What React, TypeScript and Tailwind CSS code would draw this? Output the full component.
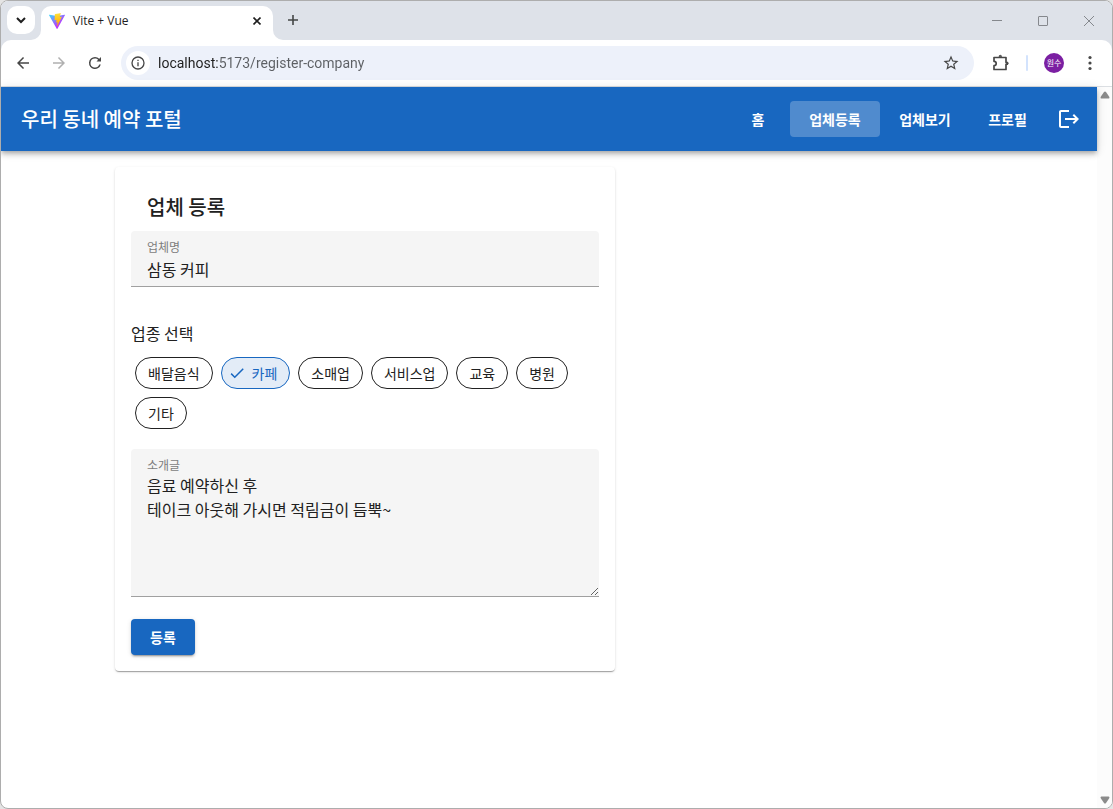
import React, { useState } from 'react';

const categories = ['배달음식', '카페', '소매업', '서비스업', '교육', '병원', '기타'];

const navItems = [
  { label: '홈', width: 'w-16' },
  { label: '업체등록', width: 'w-[90px]', active: true },
  { label: '업체보기', width: 'w-[90px]' },
  { label: '프로필', width: 'w-[75px]' },
];

// Material icon, 24x24 grid
const Icon: React.FC<{ d: string; className?: string }> = ({ d, className = 'size-5' }) => (
  <svg viewBox="0 0 24 24" fill="currentColor" className={`shrink-0 ${className}`} aria-hidden="true">
    <path d={d} />
  </svg>
);

const ViteLogo = () => (
  <svg viewBox="0 0 256 257" className="size-4 shrink-0" aria-hidden="true">
    <defs>
      <linearGradient id="vite-a" x1="-.8%" x2="57.6%" y1="7.7%" y2="78.4%">
        <stop offset="0%" stopColor="#41D1FF" />
        <stop offset="100%" stopColor="#BD34FE" />
      </linearGradient>
      <linearGradient id="vite-b" x1="43.4%" x2="50.3%" y1="2.2%" y2="89%">
        <stop offset="0%" stopColor="#FFEA83" />
        <stop offset="8.3%" stopColor="#FFDD35" />
        <stop offset="100%" stopColor="#FFA800" />
      </linearGradient>
    </defs>
    <path
      fill="url(#vite-a)"
      d="M255.153 37.938L134.897 252.976c-2.483 4.44-8.862 4.466-11.382.048L.875 37.958c-2.746-4.814 1.371-10.646 6.827-9.67l120.385 21.517a6.537 6.537 0 0 0 2.322-.004l117.867-21.483c5.438-.991 9.574 4.796 6.877 9.62Z"
    />
    <path
      fill="url(#vite-b)"
      d="M185.432.063L96.44 17.501a3.268 3.268 0 0 0-2.634 3.014l-5.474 92.456a3.268 3.268 0 0 0 3.997 3.378l24.777-5.718c2.318-.535 4.413 1.507 3.936 3.838l-7.361 36.047c-.495 2.426 1.782 4.5 4.151 3.78l15.304-4.649c2.372-.72 4.652 1.36 4.15 3.788l-11.698 56.621c-.732 3.542 3.979 5.473 5.943 2.437l1.313-2.028l72.516-144.72c1.215-2.423-.88-5.186-3.54-4.672l-25.505 4.922c-2.396.462-4.435-1.77-3.759-4.114l16.646-57.705c.677-2.35-1.37-4.583-3.769-4.113Z"
    />
  </svg>
);

const TitleBar = () => (
  <div className="flex h-[39px] items-end bg-[#dee2e9] pl-1.5">
    <button aria-label="탭 검색" className="mb-1.5 flex size-7 items-center justify-center rounded-[10px] bg-white">
      <svg viewBox="0 0 10 10" className="size-2.5" fill="none" stroke="#1f1f1f" strokeWidth="2">
        <path d="M1 3l4 4 4-4" />
      </svg>
    </button>

    <div className="relative ml-1.5 flex h-[34px] w-[232px] items-center rounded-t-[10px] bg-white pr-2 pb-1 pl-2">
      {/* Скругления у основания вкладки */}
      <svg viewBox="0 0 10 10" className="absolute bottom-0 -left-2.5 size-2.5" fill="#fff">
        <path d="M10 0A10 10 0 0 1 0 10H10Z" />
      </svg>
      <svg viewBox="0 0 10 10" className="absolute -right-2.5 bottom-0 size-2.5" fill="#fff">
        <path d="M0 0A10 10 0 0 0 10 10H0Z" />
      </svg>
      <ViteLogo />
      <span className="ml-2 flex-1 font-['Open_Sans',sans-serif] text-xs leading-5 text-[#1f1f1f]">Vite + Vue</span>
      <button aria-label="탭 닫기" className="flex size-4 items-center justify-center">
        <svg viewBox="0 0 8 8" className="size-2" fill="none" stroke="#1f1f1f" strokeWidth="1.6">
          <path d="M.5 .5l7 7M7.5 .5l-7 7" />
        </svg>
      </button>
    </div>

    <button aria-label="새 탭" className="mb-1.5 ml-1.5 flex size-7 items-center justify-center">
      <svg viewBox="0 0 10 10" className="size-2.5" fill="none" stroke="#444746" strokeWidth="1.6">
        <path d="M5 0v10M0 5h10" />
      </svg>
    </button>

    <div className="ml-auto flex h-full text-[#85888d]">
      <button aria-label="최소화" className="flex w-[46px] items-center justify-center">
        <svg viewBox="0 0 10 10" className="size-2.5" stroke="currentColor" fill="none">
          <path d="M0 4.5h10" />
        </svg>
      </button>
      <button aria-label="최대화" className="flex w-[46px] items-center justify-center">
        <svg viewBox="0 0 10 10" className="size-2.5" stroke="currentColor" fill="none">
          <rect x=".5" y=".5" width="9" height="9" rx=".5" />
        </svg>
      </button>
      <button aria-label="닫기" className="flex w-[46px] items-center justify-center">
        <svg viewBox="0 0 10 10" className="size-2.5" stroke="currentColor" fill="none">
          <path d="M0 0l10 10M10 0L0 10" />
        </svg>
      </button>
    </div>
  </div>
);

const Toolbar = () => {
  const [url, setUrl] = useState('localhost:5173/register-company');

  return (
    <div className="bg-[#dee2e9]">
      <div className="flex h-[47px] items-center rounded-t-[10px] border-b border-[#dcdfe3] bg-white pr-3 pl-1 text-[#474747]">
        <button aria-label="뒤로" className="flex w-9 justify-center">
          <Icon className="size-[18px]" d="M20 11H7.83l5.59-5.59L12 4l-8 8 8 8 1.41-1.41L7.83 13H20v-2z" />
        </button>
        <button aria-label="앞으로" className="flex w-9 justify-center text-[#b0b0b0]">
          <Icon className="size-[18px]" d="M12 4l-1.41 1.41L16.17 11H4v2h12.17l-5.58 5.59L12 20l8-8z" />
        </button>
        <button aria-label="새로고침" className="flex w-9 justify-center">
          <Icon
            className="size-[18px]"
            d="M17.65 6.35A7.96 7.96 0 0 0 12 4a8 8 0 1 0 7.73 10h-2.08A6 6 0 1 1 12 6c1.66 0 3.14.69 4.22 1.78L14 10h6V4z"
          />
        </button>

        <div className="ml-2 flex h-[34px] flex-1 items-center rounded-full bg-[#edf1fa] pr-3.5 pl-[5px]">
          <button aria-label="사이트 정보 보기" className="flex size-6 items-center justify-center rounded-full bg-white">
            <Icon
              className="size-4"
              d="M11 7h2v2h-2zm0 4h2v6h-2zm1-9a10 10 0 1 0 0 20 10 10 0 0 0 0-20zm0 18a8 8 0 1 1 0-16 8 8 0 0 1 0 16z"
            />
          </button>
          {/* Хост темнее остального адреса */}
          <input
            aria-label="주소창"
            value={url}
            onChange={(e) => setUrl(e.target.value)}
            className="ml-2 min-w-0 flex-1 bg-[linear-gradient(90deg,#1f1f1f_60px,#5c5f63_60px)] bg-clip-text font-[Roboto,sans-serif] text-sm text-transparent outline-none"
          />
          <button aria-label="북마크">
            <Icon
              d="M22 9.24l-7.19-.62L12 2 9.19 8.63 2 9.24l5.46 4.73L5.82 21 12 17.27 18.18 21l-1.63-7.03L22 9.24zM12 15.4l-3.76 2.27 1-4.28-3.32-2.88 4.38-.38L12 6.1l1.71 4.04 4.38.38-3.32 2.88 1 4.28L12 15.4z"
              className="size-[18px]"
            />
          </button>
        </div>

        <button aria-label="확장 프로그램" className="ml-4">
          <svg viewBox="0 0 20 20" className="size-5" fill="none" stroke="currentColor" strokeWidth="1.7">
            <path d="M4 4.5h12v4.8h.6a1 1 0 0 1 0 2H16v5.2H4v-3.8a2.2 2.2 0 0 0 0-4.4z" strokeLinejoin="round" />
            <path d="M9 3.6h2.6a1.3 1.3 0 0 0-2.6 0zM17 9.2v2.2a1.1 1.1 0 0 0 0-2.2z" fill="currentColor" strokeWidth=".8" />
          </svg>
        </button>
        <span className="ml-4 h-4 w-0.5 rounded-full bg-[#d3e3fd]" />
        <button className="ml-4 flex size-5 items-center justify-center rounded-full bg-[#7b1fa2] text-[8px] text-white">
          원수
        </button>
        <button aria-label="메뉴" className="ml-4">
          <svg viewBox="0 0 20 20" className="size-5" fill="currentColor">
            <circle cx="10" cy="4.5" r="1.6" />
            <circle cx="10" cy="10" r="1.6" />
            <circle cx="10" cy="15.5" r="1.6" />
          </svg>
        </button>
      </div>
    </div>
  );
};

const AppBar = () => (
  <header className="relative flex h-16 items-center bg-[#1867c0] pr-1 pl-5 text-white shadow-[0_2px_4px_-1px_rgba(0,0,0,0.2),0_4px_5px_0_rgba(0,0,0,0.14),0_1px_10px_0_rgba(0,0,0,0.12)]">
    <h1 className="flex-1 text-xl font-medium">우리 동네 예약 포털</h1>
    <nav className="flex items-center">
      {navItems.map((item) => (
        <a
          key={item.label}
          href="#"
          className={`flex h-9 items-center justify-center rounded text-sm font-bold ${item.width} ${
            item.active ? 'bg-[#508bce]' : ''
          }`}
        >
          {item.label}
        </a>
      ))}
    </nav>
    <button aria-label="로그아웃" className="flex size-12 items-center justify-center">
      <Icon
        className="size-6"
        d="M17 7l-1.41 1.41L18.17 11H8v2h10.17l-2.58 2.58L17 17l5-5M4 5h8V3H4c-1.1 0-2 .9-2 2v14c0 1.1.9 2 2 2h8v-2H4V5z"
      />
    </button>
  </header>
);

const RegisterForm = () => {
  const [name, setName] = useState('삼동 커피');
  const [category, setCategory] = useState('카페');
  const [intro, setIntro] = useState('음료 예약하신 후\n테이크 아웃해 가시면 적림금이 듬뿍~');

  return (
    <form
      onSubmit={(e) => e.preventDefault()}
      className="max-w-[500px] rounded bg-white p-4 text-[#212121] shadow-[0_2px_1px_-1px_rgba(0,0,0,0.2),0_1px_1px_0_rgba(0,0,0,0.14),0_1px_3px_0_rgba(0,0,0,0.12)]"
    >
      <h2 className="px-4 py-2 text-xl leading-8 font-medium">업체 등록</h2>

      {/* Название компании */}
      <div className="flex h-14 flex-col rounded-t border-b border-[#a0a0a0] bg-[#f5f5f5] px-4 pt-2">
        <label htmlFor="name" className="text-xs leading-4 text-[#7d7d7d]">업체명</label>
        <input
          id="name"
          value={name}
          onChange={(e) => setName(e.target.value)}
          className="h-7 bg-transparent text-base outline-none"
        />
      </div>

      {/* Категория */}
      <p className="mt-[34px] text-base leading-6">업종 선택</p>
      <div className="mt-3 flex flex-wrap gap-2 px-1">
        {categories.map((item) => {
          const selected = item === category;
          return (
            <button
              key={item}
              type="button"
              aria-pressed={selected}
              onClick={() => setCategory(item)}
              className={`flex h-8 items-center rounded-full border pr-3 text-sm ${
                selected ? 'gap-1.5 border-[#1867c0] bg-[#e3ecf7] pl-1.5 text-[#1867c0]' : 'border-[#212121] pl-3'
              }`}
            >
              {selected && <Icon className="size-[18px]" d="M21 7L9 19l-5.5-5.5 1.41-1.41L9 16.17 19.59 5.59 21 7z" />}
              {item}
            </button>
          );
        })}
      </div>

      {/* Описание */}
      <div className="mt-5 rounded-t border-b border-[#a0a0a0] bg-[#f5f5f5] pt-2">
        <label htmlFor="intro" className="block px-4 text-xs leading-4 text-[#7d7d7d]">소개글</label>
        <textarea
          id="intro"
          value={intro}
          onChange={(e) => setIntro(e.target.value)}
          className="block h-[123px] w-full resize-y bg-transparent px-4 text-base leading-6 outline-none"
        />
      </div>

      <button
        type="submit"
        className="mt-[22px] block h-9 w-16 rounded bg-[#1867c0] text-sm font-bold text-white shadow-[0_3px_1px_-2px_rgba(0,0,0,0.2),0_2px_2px_0_rgba(0,0,0,0.14),0_1px_5px_0_rgba(0,0,0,0.12)]"
      >
        등록
      </button>
    </form>
  );
};

const ScrollTrack = () => (
  <div className="flex w-[15px] shrink-0 flex-col items-center justify-between bg-[#fcfcfc] py-1 text-[#8b8b8b]" aria-hidden="true">
    <svg viewBox="0 0 10 8" className="h-2 w-2.5" fill="currentColor">
      <path d="M5 .5Q5.6 .5 6 1L9.4 6Q9.8 7.5 8.6 7.5H1.4Q.2 7.5 .6 6L4 1Q4.4 .5 5 .5Z" />
    </svg>
    <svg viewBox="0 0 10 8" className="h-2 w-2.5" fill="currentColor">
      <path d="M5 7.5Q5.6 7.5 6 7L9.4 2Q9.8 .5 8.6 .5H1.4Q.2 .5 .6 2L4 7Q4.4 7.5 5 7.5Z" />
    </svg>
  </div>
);

const App: React.FC = () => {
  return (
    <div className="flex min-h-screen bg-[#e4e4e4] font-['Noto_Sans_CJK_KR',sans-serif]">
      <div className="flex flex-1 flex-col overflow-hidden rounded-lg border border-[#adadad] bg-white">
        <TitleBar />
        <Toolbar />
        <div className="flex flex-1">
          <div className="flex-1">
            <AppBar />
            <main className="mx-auto max-w-[900px] p-4">
              <RegisterForm />
            </main>
          </div>
          <ScrollTrack />
        </div>
      </div>
    </div>
  );
};

export default App;
